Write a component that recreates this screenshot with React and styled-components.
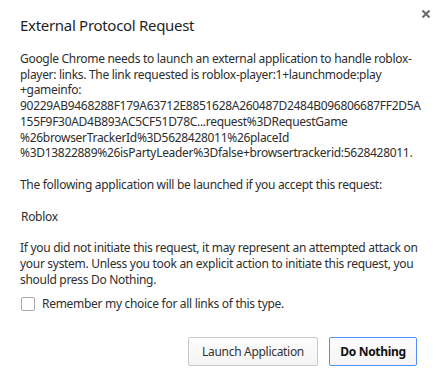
import React from "react";
import styled, { createGlobalStyle } from "styled-components";

const Global = createGlobalStyle`
  html, body { margin: 0; padding: 0; background: #ffffff; }
  body { font-family: "Noto Sans", "Open Sans", sans-serif; }
`;

const Dialog = styled.div`
  position: relative;
  width: 440px;
  height: 390px;
  box-sizing: border-box;
  background: #ffffff;
  color: #2e2e2e;
  padding: 15px 20px 0 20px;
  display: flex;
  flex-direction: column;
  letter-spacing: -0.3px;
`;

const Title = styled.h1`
  margin: 0;
  font-size: 15px;
  font-weight: 400;
  line-height: 20px;
  color: #1f1f1f;
`;

const CloseButton = styled.button`
  position: absolute;
  top: 10px;
  right: 10px;
  width: 8px;
  height: 8px;
  padding: 0;
  border: 0;
  background: transparent;
  display: flex;
  align-items: center;
  justify-content: center;
`;

const Body = styled.div`
  margin-top: 16px;
  font-size: 12px;
  line-height: 15.7px;
  display: flex;
  flex-direction: column;
  gap: 16px;
`;

const Para = styled.p`
  margin: 0;
  padding-left: ${(p) => (p.$indent ? "1px" : "0")};
`;

const Line = styled.span`
  display: block;
  white-space: nowrap;
`;

const CheckRow = styled.label`
  display: flex;
  align-items: center;
  gap: 7px;
  margin-top: 9px;
  font-size: 12px;
  line-height: 16px;
`;

const Box = styled.span`
  width: 12px;
  height: 12px;
  border: 1px solid #a9a9a9;
  border-radius: 2px;
  background: #fff;
  margin-left: 1px;
`;

const Buttons = styled.div`
  display: flex;
  justify-content: flex-end;
  gap: 11px;
  margin-top: 25px;
  padding-right: 3px;
`;

const Button = styled.button`
  height: 29px;
  width: ${(p) => p.$width}px;
  box-sizing: border-box;
  padding: 0;
  font-family: "Noto Sans", "Open Sans", sans-serif;
  letter-spacing: -0.3px;
  font-size: 12px;
  font-weight: ${(p) => (p.$primary ? 700 : 400)};
  color: ${(p) => (p.$primary ? "#111" : "#333")};
  border: 1px solid ${(p) => (p.$primary ? "#4d90fe" : "#c8c8c8")};
  border-radius: 2px;
  background: linear-gradient(#fdfdfd, #f4f4f4);
`;

const p1 = [
  "Google Chrome needs to launch an external application to handle roblox-",
  "player: links. The link requested is roblox-player:1+launchmode:play",
  "+gameinfo:",
  "90229AB9468288F179A63712E8851628A260487D2484B096806687FF2D5A",
  "155F9F30AD4B893AC5CF51D78C...request%3DRequestGame",
  "%26browserTrackerId%3D5628428011%26placeId",
  "%3D13822889%26isPartyLeader%3Dfalse+browsertrackerid:5628428011.",
];

const p3 = [
  "If you did not initiate this request, it may represent an attempted attack on",
  "your system. Unless you took an explicit action to initiate this request, you",
  "should press Do Nothing.",
];

export default function App() {
  return (
    <>
      <Global />
      <Dialog>
        <Title>External Protocol Request</Title>
        <CloseButton aria-label="Close">
          <svg width="8" height="8" viewBox="0 0 8 8">
            <path d="M0.5 0.5 L7.5 7.5 M7.5 0.5 L0.5 7.5" stroke="#6b6b6b" strokeWidth="2" />
          </svg>
        </CloseButton>
        <Body>
          <Para>
            {p1.map((l) => (
              <Line key={l}>{l}</Line>
            ))}
          </Para>
          <Para>The following application will be launched if you accept this request:</Para>
          <Para $indent>Roblox</Para>
          <Para>
            {p3.map((l) => (
              <Line key={l}>{l}</Line>
            ))}
          </Para>
        </Body>
        <CheckRow>
          <Box />
          Remember my choice for all links of this type.
        </CheckRow>
        <Buttons>
          <Button $width={130}>Launch Application</Button>
          <Button $primary $width={88}>Do Nothing</Button>
        </Buttons>
      </Dialog>
    </>
  );
}
